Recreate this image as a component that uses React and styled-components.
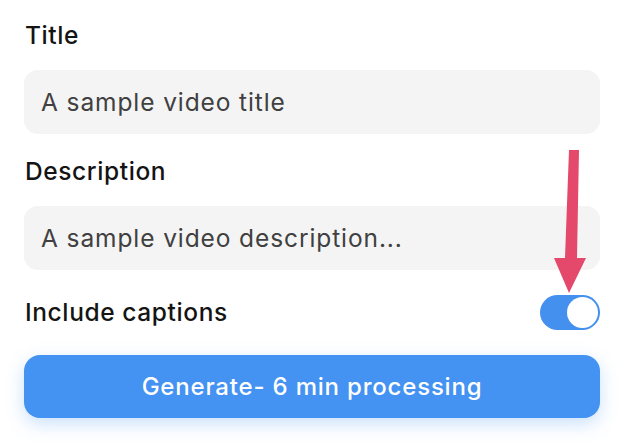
import React, { useState } from "react";
import styled, { createGlobalStyle } from "styled-components";

const GlobalStyle = createGlobalStyle`
  html, body {
    margin: 0;
    padding: 0;
    background: #ffffff;
  }
  body {
    font-family: Inter, "Noto Sans", sans-serif;
    -webkit-font-smoothing: antialiased;
  }
`;

const Page = styled.div`
  position: relative;
  width: 626px;
  height: 444px;
  overflow: hidden;
`;

const Form = styled.form`
  display: flex;
  flex-direction: column;
  padding: 21px 26px 0 24px;
`;

const Field = styled.div`
  display: flex;
  flex-direction: column;
  gap: 20px;
  margin-bottom: ${(p) => p.$after || 0}px;
`;

const Label = styled.label`
  font-size: 24.5px;
  line-height: 29px;
  font-weight: 500;
  letter-spacing: 0.6px;
  color: #141414;
  padding-left: 1px;
`;

const TextInput = styled.input`
  box-sizing: border-box;
  width: 100%;
  height: 64px;
  border: none;
  outline: none;
  border-radius: 14px;
  background: #f4f4f5;
  padding: 0 16px 0 17px;
  font-family: Inter, "Noto Sans", sans-serif;
  font-size: 24.5px;
  font-weight: 400;
  letter-spacing: 0.9px;
  color: #404040;

  &::placeholder {
    color: #404040;
    opacity: 1;
  }
`;

const ToggleRow = styled.div`
  display: flex;
  align-items: center;
  justify-content: space-between;
  margin-top: 25px;
  margin-bottom: 25px;
`;

const Switch = styled.button`
  position: relative;
  width: 60px;
  height: 35px;
  padding: 0;
  border: none;
  border-radius: 18px;
  background: ${(p) => (p.$on ? "#4390ef" : "#d4d4d8")};
  cursor: pointer;
`;

const Knob = styled.span`
  position: absolute;
  top: 2px;
  left: ${(p) => (p.$on ? "27px" : "2px")};
  width: 31px;
  height: 31px;
  border-radius: 50%;
  background: #ffffff;
  transition: left 0.15s ease;
`;

const SubmitButton = styled.button`
  height: 63px;
  border: none;
  border-radius: 16px;
  background: #4492f2;
  color: #ffffff;
  font-family: Inter, "Noto Sans", sans-serif;
  font-size: 24px;
  font-weight: 500;
  letter-spacing: 0.8px;
  box-shadow: 0 6px 18px rgba(68, 146, 242, 0.28);
  cursor: pointer;
`;

const Arrow = styled.svg`
  position: absolute;
  left: 550px;
  top: 146px;
  pointer-events: none;
`;

function PointerArrow() {
  return (
    <Arrow width="40" height="150" viewBox="0 0 40 150">
      <path d="M19 4 L29 4 L27 112 L36 112 L19 147 L4 112 L15 112 Z" fill="#e4486a" />
    </Arrow>
  );
}

export default function App() {
  const [captions, setCaptions] = useState(true);

  return (
    <Page>
      <GlobalStyle />
      <Form onSubmit={(e) => e.preventDefault()}>
        <Field $after={23}>
          <Label htmlFor="title">Title</Label>
          <TextInput id="title" placeholder="A sample video title" />
        </Field>
        <Field>
          <Label htmlFor="description">Description</Label>
          <TextInput id="description" placeholder="A sample video description..." />
        </Field>
        <ToggleRow>
          <Label as="span">Include captions</Label>
          <Switch
            type="button"
            $on={captions}
            onClick={() => setCaptions(!captions)}
            aria-pressed={captions}
          >
            <Knob $on={captions} />
          </Switch>
        </ToggleRow>
        <SubmitButton type="submit">Generate- 6 min processing</SubmitButton>
      </Form>
      <PointerArrow />
    </Page>
  );
}
